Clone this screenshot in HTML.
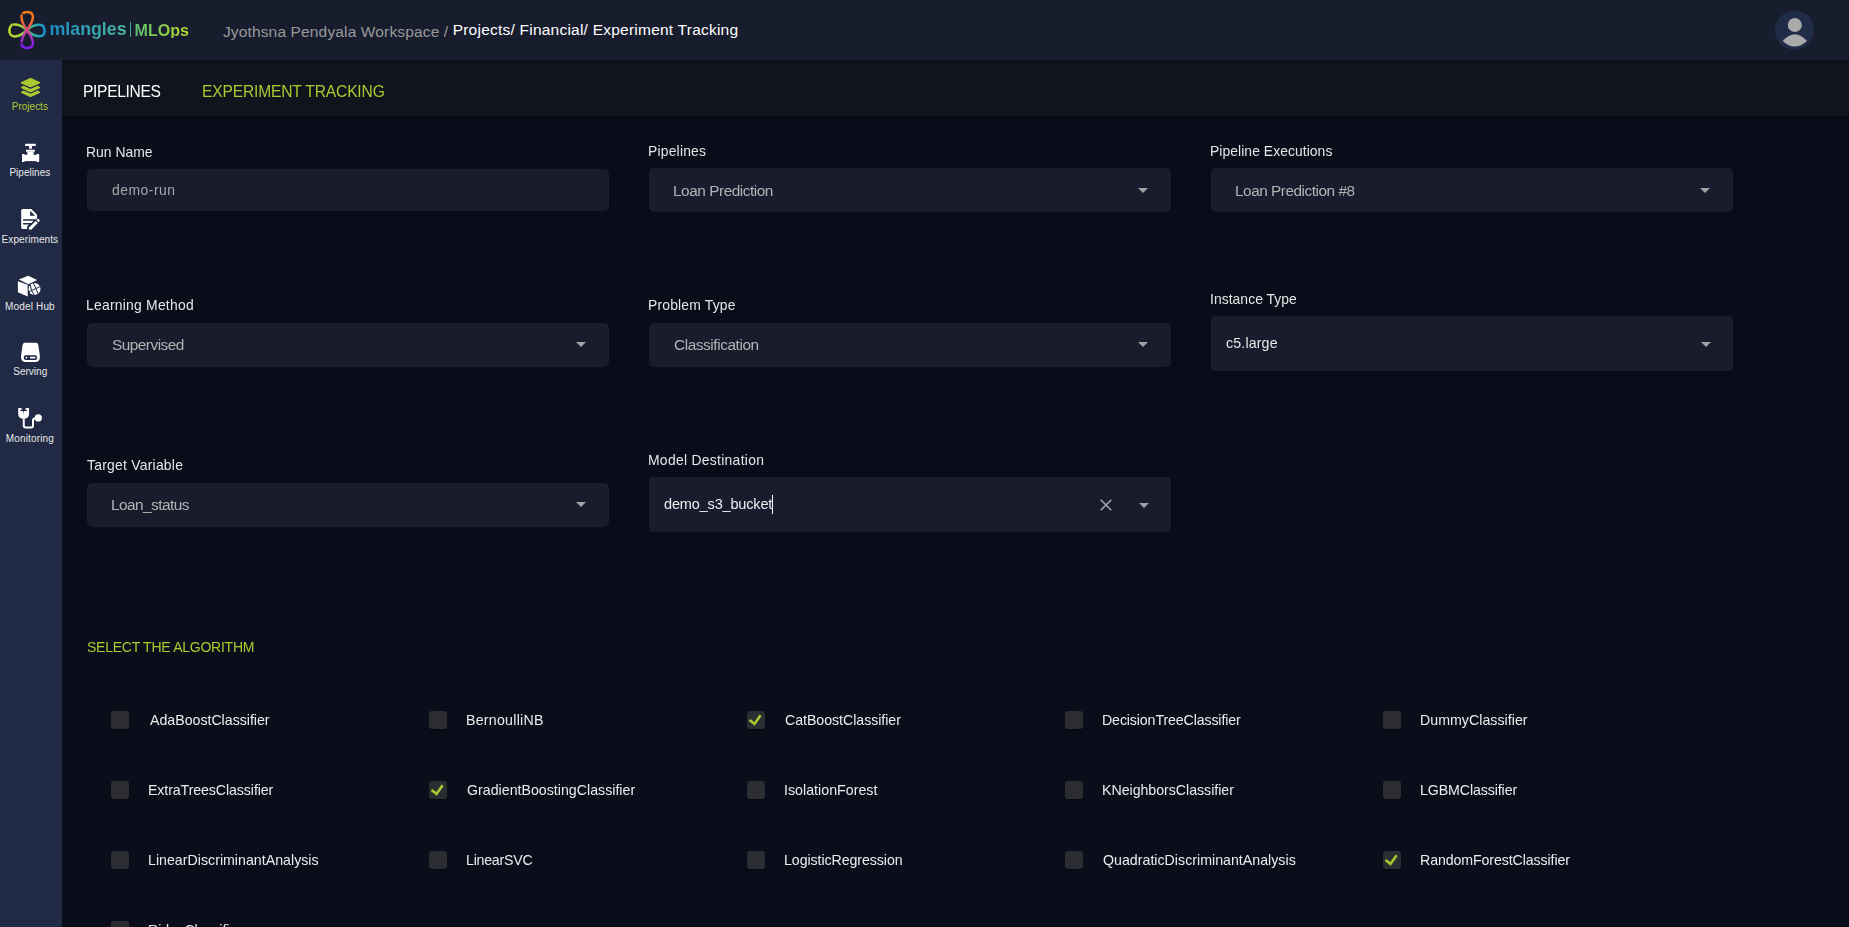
<!DOCTYPE html>
<html><head><meta charset="utf-8"><title>mlangles MLOps - Experiment Tracking</title>
<style>
html,body{margin:0;padding:0;}
body{width:1849px;height:927px;position:relative;overflow:hidden;background:#080d19;font-family:"Liberation Sans",sans-serif;}
.t{position:absolute;white-space:pre;line-height:1;}
.g{will-change:transform;}
</style></head><body>
<div style="position:absolute;left:62px;top:60px;width:1787px;height:56px;background:#10141d;box-shadow:0 1px 2px rgba(0,0,0,0.2)"></div>
<div style="position:absolute;left:0;top:0;width:1849px;height:60px;background:#181d2e;box-shadow:0 1px 3px rgba(0,0,0,0.25)"></div>
<div style="position:absolute;left:0;top:60px;width:62px;height:867px;background:#212a45"></div>
<svg style="position:absolute;left:0;top:0" width="50" height="60" viewBox="0 0 50 60">
<defs>
<linearGradient id="gv" gradientUnits="userSpaceOnUse" x1="0" y1="10" x2="0" y2="50"><stop offset="0" stop-color="#fb7e16"/><stop offset="0.28" stop-color="#f26a2a"/><stop offset="0.5" stop-color="#d8487e"/><stop offset="0.72" stop-color="#a22ccc"/><stop offset="1" stop-color="#7618f6"/></linearGradient>
<linearGradient id="gh" gradientUnits="userSpaceOnUse" x1="8" y1="0" x2="47" y2="0"><stop offset="0" stop-color="#c2dd28"/><stop offset="0.3" stop-color="#a8d23c"/><stop offset="0.5" stop-color="#62be78"/><stop offset="0.72" stop-color="#2aa8a8"/><stop offset="1" stop-color="#168cd4"/></linearGradient>
</defs>
<g fill="none" stroke-width="2.5">
<path d="M27,30 C23.5,27 19,24.5 14.5,24.5 C11,24.5 9.4,27.5 9.4,30.5 C9.4,33.5 11,36.4 14.5,36.4 C19,36.4 23.5,33.5 27,30 C30.5,26.5 35,24.7 39.5,24.7 C43,24.7 44.5,27.5 44.5,30.5 C44.5,33.5 43,36.3 39.5,36.3 C35,36.3 30.5,33.5 27,30 Z" stroke="url(#gh)"/>
<path d="M27,30 C24.5,26.5 21.5,21.5 21.5,17 C21.5,13 24.5,12.1 27.2,12.1 C30,12.1 32.9,13 32.9,17 C32.9,21.5 29.5,26.5 27,30 C24.5,33.5 21.5,38.5 21.5,43 C21.5,47 24.5,48 27.2,48 C30,48 32.9,47 32.9,43 C32.9,38.5 29.5,33.5 27,30 Z" stroke="url(#gv)"/>
</g>
<g stroke="#181d2e" stroke-width="1.1">
<path d="M21.3,13.2 L24.4,15.6"/>
<path d="M11,23.2 L13.2,26.6"/>
<path d="M43,30.9 L46.4,30.9"/>
<path d="M19.6,42.4 L23.4,43.6"/>
</g>
<g>
<path d="M22.8,12.6 L25.6,11 L25,14.4 Z" fill="#f97c18"/>
<path d="M10,25 L12.2,23 L12.8,26.2 Z" fill="#c0dc2a"/>
<path d="M43.4,29.6 L46.9,31.2 L43.4,32.4 Z" fill="#1890d2"/>
<path d="M21.6,44.2 L24,46 L20.6,46.4 Z" fill="#7a1af2"/>
</g>
</svg>
<div class="t" style="left:49.5px;top:20.73px;font-size:17.8px;font-weight:700;background:linear-gradient(90deg,#1b8dc6,#4ab89c);-webkit-background-clip:text;background-clip:text;color:transparent">mlangles</div>
<div style="position:absolute;left:130px;top:22px;width:1px;height:15px;background:#3aa896"></div>
<div class="t" style="left:134.5px;top:22.37px;font-size:16.1px;font-weight:700;background:linear-gradient(90deg,#5ec072,#b6da30);-webkit-background-clip:text;background-clip:text;color:transparent">MLOps</div>
<div class="t" style="left:222.94px;top:24.00px;font-size:15.5px;letter-spacing:0.146px;color:#999999;font-weight:400;">Jyothsna Pendyala Workspace /</div>
<div class="t" style="left:452.66px;top:22.00px;font-size:15.5px;letter-spacing:0.228px;color:#ffffff;font-weight:400;">Projects/ Financial/ Experiment Tracking</div>
<svg style="position:absolute;left:1774px;top:10px" width="41" height="41" viewBox="0 0 41 41">
<circle cx="20.6" cy="20.1" r="19.6" fill="#202b48"/>
<circle cx="20.8" cy="15" r="7" fill="#aaaaaa"/>
<path d="M8.7,31 Q20.8,17.5 33,31 Q20.8,42 8.7,31 Z" fill="#aaaaaa"/>
</svg>
<div class="t g" style="left:82.65px;top:84.00px;font-size:15.6px;letter-spacing:-0.326px;color:#ffffff;font-weight:400;">PIPELINES</div>
<div class="t g" style="left:201.75px;top:84.00px;font-size:15.6px;letter-spacing:-0.164px;color:#adc930;font-weight:400;">EXPERIMENT TRACKING</div>
<svg style="position:absolute;left:0;top:60px" width="62" height="400" viewBox="0 60 62 400">
<g fill="#adc930" transform="translate(21,77.9) scale(0.0373)">
<path d="M12.41 148.02l232.94 105.67c6.8 3.09 14.49 3.09 21.29 0l232.94-105.67c16.55-7.51 16.55-32.52 0-40.03L266.65 2.31a25.607 25.607 0 0 0-21.290 0L12.41 107.98c-16.55 7.51-16.55 32.53 0 40.04zm487.18 88.28l-58.09-26.330-161.64 73.27c-7.56 3.43-15.59 5.17-23.86 5.17s-16.29-1.74-23.86-5.17L70.51 209.97l-58.1 26.33c-16.55 7.5-16.55 32.5 0 40l232.94 105.59c6.8 3.08 14.49 3.08 21.29 0L499.59 276.3c16.55-7.5 16.55-32.5 0-40zm0 127.8l-57.87-26.23-161.86 73.37c-7.56 3.43-15.59 5.17-23.86 5.17s-16.29-1.740-23.86-5.17L70.29 337.87 12.41 364.1c-16.55 7.5-16.55 32.5 0 40l232.94 105.59c6.8 3.08 14.49 3.08 21.29 0L499.59 404.1c16.55-7.5 16.55-32.5 0-40z"/>
</g>
<g fill="#ffffff">
<rect x="25.1" y="143.8" width="10.6" height="2.1" rx="0.5"/>
<rect x="29.1" y="145.8" width="2.9" height="2.9"/>
<rect x="26" y="149.8" width="8.9" height="2" rx="0.4"/>
<rect x="27.3" y="151.7" width="6.3" height="3.3"/>
<rect x="22" y="154.8" width="17.1" height="6.3"/>
<rect x="22" y="153.9" width="2.6" height="8.2" rx="0.5"/>
<rect x="36.5" y="153.9" width="2.6" height="8.2" rx="0.5"/>
</g>
<g fill="#ffffff">
<path d="M22.7,208.9 L31.3,208.9 L37,214.7 L37,217.7 Q37,219.2 35.5,219.2 L23.1,219.2 L23.1,220.7 L33.6,220.7 L31.3,223 L23.1,223 L23.1,224.6 L29,224.6 L27.1,226.5 L27.1,229 L22.7,229 Q21.2,229 21.2,227.5 L21.2,210.4 Q21.2,208.9 22.7,208.9 Z"/>
<path d="M30.1,210.7 L30.1,215.7 L35.1,215.7 Z" fill="#212a45"/>
<path d="M28.9,229.8 L29.3,227.2 L35.6,220.9 L37.8,223.1 L31.5,229.4 Z"/>
<path d="M36.4,220.1 L37.4,219.1 Q38.1,218.5 38.8,219.2 L39.5,219.9 Q40.2,220.6 39.5,221.3 L38.5,222.3 Z"/>
</g>
<g fill="#ffffff">
<path d="M18.9,279.5 L28.2,275.8 L37.1,279.9 L28.4,284.2 Z"/>
<path d="M17.9,281.2 L27.6,284.7 L27.75,296.5 L17.9,292.3 Z"/>
<circle cx="34.5" cy="289" r="6"/>
<g stroke="#212a45" stroke-width="1" fill="none">
<path d="M28.8,291.8 L40.5,286.4"/>
<path d="M33.2,282.8 Q35.5,287 38.6,295"/>
<path d="M30.2,284.6 Q30.8,291 34.5,295.6"/>
</g>
</g>
<g fill="#ffffff">
<path d="M25,342.8 L36,342.8 Q38,342.8 38.3,345 L39.9,356 Q40.3,362 35,362 L26,362 Q20.6,362 21,356 L22.6,345 Q23,342.8 25,342.8 Z"/>
<rect x="23.7" y="355.2" width="13.5" height="4.9" rx="2.4" fill="#212a45"/>
<circle cx="26.5" cy="357.6" r="0.9"/>
<rect x="29.8" y="356.8" width="5.8" height="1.6" rx="0.8"/>
</g>
<path d="M18.6,408.1 L28.65,408.1 Q29.05,408.1 29.05,408.5 L29.05,414 Q29.05,418.8 23.6,418.8 Q18.2,418.8 18.2,414 L18.2,408.5 Q18.2,408.1 18.6,408.1 Z" fill="#ffffff"/>
<path d="M21.6,407.6 L25.6,407.6 L25.6,410.1 L27,410.1 L27,411.1 L24,411.1 L23.6,414.4 L23.2,411.1 L20.2,411.1 L20.2,410.1 L21.6,410.1 Z" fill="#212a45"/>
<path d="M23.75,418.4 L23.75,425.5 Q23.75,427.5 25.75,427.5 L31,427.5 Q33,427.5 33,425.5 L33,420.6 Q33,418.6 35.2,418.2" fill="none" stroke="#ffffff" stroke-width="2"/>
<circle cx="38.3" cy="417.9" r="3.6" fill="#ffffff"/>
</svg>
<div class="t" style="left:11.80px;top:102.00px;font-size:10.0px;letter-spacing:-0.003px;color:#adc930;font-weight:400;">Projects</div>
<div class="t" style="left:9.40px;top:168.00px;font-size:10.0px;letter-spacing:0.040px;color:#e8e8e8;font-weight:400;">Pipelines</div>
<div class="t" style="left:1.60px;top:235.00px;font-size:10.0px;letter-spacing:0.092px;color:#e8e8e8;font-weight:400;">Experiments</div>
<div class="t" style="left:5.00px;top:302.00px;font-size:10.0px;letter-spacing:0.163px;color:#e8e8e8;font-weight:400;">Model Hub</div>
<div class="t" style="left:13.20px;top:367.00px;font-size:10.0px;letter-spacing:0.026px;color:#e8e8e8;font-weight:400;">Serving</div>
<div class="t" style="left:5.70px;top:434.00px;font-size:10.0px;letter-spacing:0.164px;color:#e8e8e8;font-weight:400;">Monitoring</div>
<div style="position:absolute;left:87px;top:608px;width:1739px;height:400px;background:#0a0e1a;border-radius:8px"></div>
<div style="position:absolute;left:87px;top:169px;width:522px;height:42px;background:#181c2d;border-radius:5px"></div>
<div style="position:absolute;left:649px;top:168px;width:522px;height:44px;background:#181c2d;border-radius:5px"></div>
<svg style="position:absolute;left:1138px;top:188px" width="10" height="5" viewBox="0 0 10 5"><path d="M0,0 L10,0 L5,5 Z" fill="#a3a3a6"/></svg>
<div style="position:absolute;left:1211px;top:168px;width:522px;height:44px;background:#181c2d;border-radius:5px"></div>
<svg style="position:absolute;left:1700px;top:188px" width="10" height="5" viewBox="0 0 10 5"><path d="M0,0 L10,0 L5,5 Z" fill="#a3a3a6"/></svg>
<div style="position:absolute;left:87px;top:323px;width:522px;height:44px;background:#181c2d;border-radius:5px"></div>
<svg style="position:absolute;left:576px;top:342px" width="10" height="5" viewBox="0 0 10 5"><path d="M0,0 L10,0 L5,5 Z" fill="#a3a3a6"/></svg>
<div style="position:absolute;left:649px;top:323px;width:522px;height:44px;background:#181c2d;border-radius:5px"></div>
<svg style="position:absolute;left:1138px;top:342px" width="10" height="5" viewBox="0 0 10 5"><path d="M0,0 L10,0 L5,5 Z" fill="#a3a3a6"/></svg>
<div style="position:absolute;left:1211px;top:316px;width:522px;height:55px;background:#181c2d;border-radius:4px"></div>
<svg style="position:absolute;left:1701px;top:342px" width="10" height="5" viewBox="0 0 10 5"><path d="M0,0 L10,0 L5,5 Z" fill="#a3a3a6"/></svg>
<div style="position:absolute;left:87px;top:483px;width:522px;height:44px;background:#181c2d;border-radius:5px"></div>
<svg style="position:absolute;left:576px;top:502px" width="10" height="5" viewBox="0 0 10 5"><path d="M0,0 L10,0 L5,5 Z" fill="#a3a3a6"/></svg>
<div style="position:absolute;left:649px;top:477px;width:522px;height:55px;background:#181c2d;border-radius:4px"></div>
<div style="position:absolute;left:772px;top:495px;width:1.2px;height:19px;background:#ffffff"></div>
<svg style="position:absolute;left:1099px;top:498px" width="14" height="14" viewBox="0 0 14 14"><path d="M1.7,1.7 L12.3,12.3 M12.3,1.7 L1.7,12.3" stroke="#a3a3a6" stroke-width="1.6"/></svg>
<svg style="position:absolute;left:1139px;top:503px" width="10" height="5" viewBox="0 0 10 5"><path d="M0,0 L10,0 L5,5 Z" fill="#a3a3a6"/></svg>
<div class="t g" style="left:86.49px;top:146.00px;font-size:13.9px;letter-spacing:0.011px;color:#e6e6e6;font-weight:400;">Run Name</div>
<div class="t g" style="left:648.39px;top:145.00px;font-size:13.9px;letter-spacing:0.203px;color:#e6e6e6;font-weight:400;">Pipelines</div>
<div class="t g" style="left:1210.39px;top:145.00px;font-size:13.9px;letter-spacing:0.062px;color:#e6e6e6;font-weight:400;">Pipeline Executions</div>
<div class="t g" style="left:86.49px;top:299.00px;font-size:13.9px;letter-spacing:0.241px;color:#e6e6e6;font-weight:400;">Learning Method</div>
<div class="t g" style="left:648.39px;top:299.00px;font-size:13.9px;letter-spacing:0.187px;color:#e6e6e6;font-weight:400;">Problem Type</div>
<div class="t g" style="left:1210.25px;top:293.00px;font-size:13.9px;letter-spacing:0.051px;color:#e6e6e6;font-weight:400;">Instance Type</div>
<div class="t g" style="left:86.72px;top:459.00px;font-size:13.9px;letter-spacing:0.251px;color:#e6e6e6;font-weight:400;">Target Variable</div>
<div class="t g" style="left:648.29px;top:454.00px;font-size:13.9px;letter-spacing:0.296px;color:#e6e6e6;font-weight:400;">Model Destination</div>
<div class="t g" style="left:111.84px;top:184.00px;font-size:13.9px;letter-spacing:0.521px;color:#a8a8a8;font-weight:400;">demo-run</div>
<div class="t g" style="left:673.27px;top:183.00px;font-size:15.4px;letter-spacing:-0.466px;color:#b3b3b3;font-weight:400;">Loan Prediction</div>
<div class="t g" style="left:1235.27px;top:183.00px;font-size:15.4px;letter-spacing:-0.490px;color:#b3b3b3;font-weight:400;">Loan Prediction #8</div>
<div class="t g" style="left:111.78px;top:337.00px;font-size:15.4px;letter-spacing:-0.518px;color:#b3b3b3;font-weight:400;">Supervised</div>
<div class="t g" style="left:673.63px;top:337.00px;font-size:15.4px;letter-spacing:-0.430px;color:#b3b3b3;font-weight:400;">Classification</div>
<div class="t g" style="left:1225.83px;top:336.00px;font-size:14.2px;letter-spacing:0.152px;color:#e6e6e6;font-weight:400;">c5.large</div>
<div class="t g" style="left:111.17px;top:497.00px;font-size:15.4px;letter-spacing:-0.542px;color:#b3b3b3;font-weight:400;">Loan_status</div>
<div class="t g" style="left:663.82px;top:497.00px;font-size:14.5px;letter-spacing:-0.160px;color:#eeeeee;font-weight:400;">demo_s3_bucket</div>
<div class="t g" style="left:86.84px;top:640.00px;font-size:14.0px;letter-spacing:-0.252px;color:#adc930;font-weight:400;">SELECT THE ALGORITHM</div>
<div style="position:absolute;left:111px;top:711px;width:18px;height:18px;background:#2c2d32;border-radius:3px;box-shadow:0 2px 2px rgba(0,0,0,0.25)"></div>
<div class="t g" style="left:149.60px;top:713.00px;font-size:14.2px;letter-spacing:-0.016px;color:#ececec;font-weight:400;">AdaBoostClassifier</div>
<div style="position:absolute;left:429px;top:711px;width:18px;height:18px;background:#2c2d32;border-radius:3px;box-shadow:0 2px 2px rgba(0,0,0,0.25)"></div>
<div class="t g" style="left:466.46px;top:713.00px;font-size:14.2px;letter-spacing:0.252px;color:#ececec;font-weight:400;">BernoulliNB</div>
<div style="position:absolute;left:747px;top:711px;width:18px;height:18px;background:#2c2d32;border-radius:3px;box-shadow:0 2px 2px rgba(0,0,0,0.25)"></div>
<svg style="position:absolute;left:747px;top:711px" width="18" height="18" viewBox="0 0 18 18"><path d="M2.5,9 L7.5,12.9 L13.6,4.3" fill="none" stroke="#a9c933" stroke-width="2.6"/></svg>
<div class="t g" style="left:784.89px;top:713.00px;font-size:14.2px;letter-spacing:-0.047px;color:#ececec;font-weight:400;">CatBoostClassifier</div>
<div style="position:absolute;left:1065px;top:711px;width:18px;height:18px;background:#2c2d32;border-radius:3px;box-shadow:0 2px 2px rgba(0,0,0,0.25)"></div>
<div class="t g" style="left:1102.46px;top:713.00px;font-size:14.2px;letter-spacing:-0.128px;color:#ececec;font-weight:400;">DecisionTreeClassifier</div>
<div style="position:absolute;left:1383px;top:711px;width:18px;height:18px;background:#2c2d32;border-radius:3px;box-shadow:0 2px 2px rgba(0,0,0,0.25)"></div>
<div class="t g" style="left:1420.46px;top:713.00px;font-size:14.2px;letter-spacing:0.023px;color:#ececec;font-weight:400;">DummyClassifier</div>
<div style="position:absolute;left:111px;top:781px;width:18px;height:18px;background:#2c2d32;border-radius:3px;box-shadow:0 2px 2px rgba(0,0,0,0.25)"></div>
<div class="t g" style="left:148.46px;top:783.00px;font-size:14.2px;letter-spacing:-0.099px;color:#ececec;font-weight:400;">ExtraTreesClassifier</div>
<div style="position:absolute;left:429px;top:781px;width:18px;height:18px;background:#2c2d32;border-radius:3px;box-shadow:0 2px 2px rgba(0,0,0,0.25)"></div>
<svg style="position:absolute;left:429px;top:781px" width="18" height="18" viewBox="0 0 18 18"><path d="M2.5,9 L7.5,12.9 L13.6,4.3" fill="none" stroke="#a9c933" stroke-width="2.6"/></svg>
<div class="t g" style="left:466.89px;top:783.00px;font-size:14.2px;letter-spacing:0.007px;color:#ececec;font-weight:400;">GradientBoostingClassifier</div>
<div style="position:absolute;left:747px;top:781px;width:18px;height:18px;background:#2c2d32;border-radius:3px;box-shadow:0 2px 2px rgba(0,0,0,0.25)"></div>
<div class="t g" style="left:784.32px;top:783.00px;font-size:14.2px;letter-spacing:0.023px;color:#ececec;font-weight:400;">IsolationForest</div>
<div style="position:absolute;left:1065px;top:781px;width:18px;height:18px;background:#2c2d32;border-radius:3px;box-shadow:0 2px 2px rgba(0,0,0,0.25)"></div>
<div class="t g" style="left:1102.46px;top:783.00px;font-size:14.2px;letter-spacing:-0.030px;color:#ececec;font-weight:400;">KNeighborsClassifier</div>
<div style="position:absolute;left:1383px;top:781px;width:18px;height:18px;background:#2c2d32;border-radius:3px;box-shadow:0 2px 2px rgba(0,0,0,0.25)"></div>
<div class="t g" style="left:1420.46px;top:783.00px;font-size:14.2px;letter-spacing:-0.108px;color:#ececec;font-weight:400;">LGBMClassifier</div>
<div style="position:absolute;left:111px;top:851px;width:18px;height:18px;background:#2c2d32;border-radius:3px;box-shadow:0 2px 2px rgba(0,0,0,0.25)"></div>
<div class="t g" style="left:148.46px;top:853.00px;font-size:14.2px;letter-spacing:0.012px;color:#ececec;font-weight:400;">LinearDiscriminantAnalysis</div>
<div style="position:absolute;left:429px;top:851px;width:18px;height:18px;background:#2c2d32;border-radius:3px;box-shadow:0 2px 2px rgba(0,0,0,0.25)"></div>
<div class="t g" style="left:466.46px;top:853.00px;font-size:14.2px;letter-spacing:-0.247px;color:#ececec;font-weight:400;">LinearSVC</div>
<div style="position:absolute;left:747px;top:851px;width:18px;height:18px;background:#2c2d32;border-radius:3px;box-shadow:0 2px 2px rgba(0,0,0,0.25)"></div>
<div class="t g" style="left:784.46px;top:853.00px;font-size:14.2px;letter-spacing:-0.073px;color:#ececec;font-weight:400;">LogisticRegression</div>
<div style="position:absolute;left:1065px;top:851px;width:18px;height:18px;background:#2c2d32;border-radius:3px;box-shadow:0 2px 2px rgba(0,0,0,0.25)"></div>
<div class="t g" style="left:1103.03px;top:853.00px;font-size:14.2px;letter-spacing:0.012px;color:#ececec;font-weight:400;">QuadraticDiscriminantAnalysis</div>
<div style="position:absolute;left:1383px;top:851px;width:18px;height:18px;background:#2c2d32;border-radius:3px;box-shadow:0 2px 2px rgba(0,0,0,0.25)"></div>
<svg style="position:absolute;left:1383px;top:851px" width="18" height="18" viewBox="0 0 18 18"><path d="M2.5,9 L7.5,12.9 L13.6,4.3" fill="none" stroke="#a9c933" stroke-width="2.6"/></svg>
<div class="t g" style="left:1420.46px;top:853.00px;font-size:14.2px;letter-spacing:-0.104px;color:#ececec;font-weight:400;">RandomForestClassifier</div>
<div style="position:absolute;left:111px;top:921px;width:18px;height:18px;background:#2c2d32;border-radius:3px;box-shadow:0 2px 2px rgba(0,0,0,0.25)"></div>
<div class="t g" style="left:148.46px;top:923.00px;font-size:14.2px;letter-spacing:-0.120px;color:#ececec;font-weight:400;">RidgeClassifier</div>

</body></html>
